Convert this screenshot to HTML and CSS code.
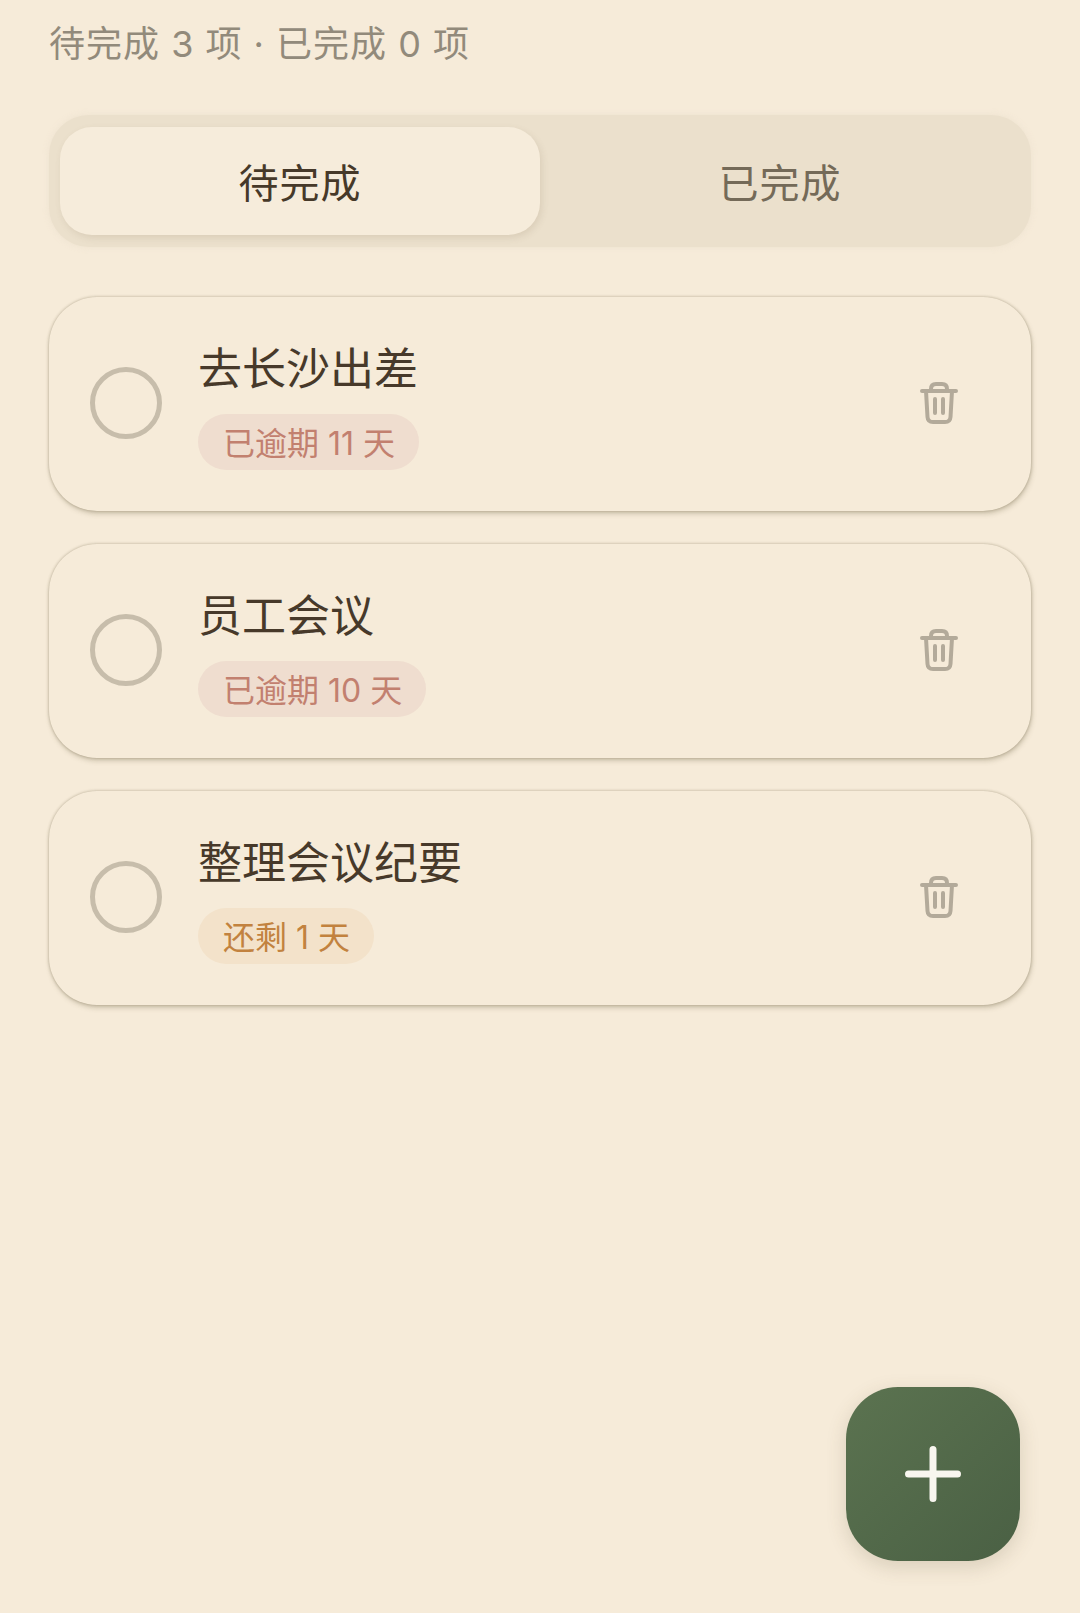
FILE: index.html
```html
<!DOCTYPE html>
<html lang="zh-CN">
<head>
    <meta charset="UTF-8">
    <meta name="viewport" content="width=device-width, initial-scale=1.0">
    <title>待办</title>

    <link rel="stylesheet" href="styles.css">
</head>
<body>

    <div class="page">
        <p class="summary">待完成 3 项 · 已完成 0 项</p>

        <div class="tabs">
            <button class="tab tab-active">待完成</button>
            <button class="tab">已完成</button>
        </div>

        <div class="list">
            <div class="card">
                <span class="check"></span>
                <div class="info">
                    <div class="title">去长沙出差</div>
                    <span class="chip chip-late">已逾期 11 天</span>
                </div>
                <svg class="trash" viewBox="0 0 38 42" fill="none" stroke="currentColor" stroke-width="4" stroke-linecap="round" stroke-linejoin="round">
                    <path d="M2 9H36M11 9V7C11 3.500 13 2 16 2H22C25 2 27 3.500 27 7V9M6 9L7.500 35C7.700 38.500 9.500 40 13 40H25C28.500 40 30.300 38.500 30.500 35L32 9M15 17V31M23 17V31"/>
                </svg>
            </div>

            <div class="card">
                <span class="check"></span>
                <div class="info">
                    <div class="title">员工会议</div>
                    <span class="chip chip-late">已逾期 10 天</span>
                </div>
                <svg class="trash" viewBox="0 0 38 42" fill="none" stroke="currentColor" stroke-width="4" stroke-linecap="round" stroke-linejoin="round">
                    <path d="M2 9H36M11 9V7C11 3.500 13 2 16 2H22C25 2 27 3.500 27 7V9M6 9L7.500 35C7.700 38.500 9.500 40 13 40H25C28.500 40 30.300 38.500 30.500 35L32 9M15 17V31M23 17V31"/>
                </svg>
            </div>

            <div class="card">
                <span class="check"></span>
                <div class="info">
                    <div class="title">整理会议纪要</div>
                    <span class="chip chip-soon">还剩 1 天</span>
                </div>
                <svg class="trash" viewBox="0 0 38 42" fill="none" stroke="currentColor" stroke-width="4" stroke-linecap="round" stroke-linejoin="round">
                    <path d="M2 9H36M11 9V7C11 3.500 13 2 16 2H22C25 2 27 3.500 27 7V9M6 9L7.500 35C7.700 38.500 9.500 40 13 40H25C28.500 40 30.300 38.500 30.500 35L32 9M15 17V31M23 17V31"/>
                </svg>
            </div>
        </div>

        <button class="fab">
            <svg viewBox="0 0 56 56" width="56" height="56" fill="none" stroke="#f8f6ef" stroke-width="7" stroke-linecap="round">
                <path d="M28 3.500V52.500M3.500 28H52.500"/>
            </svg>
        </button>
    </div>

</body>
</html>
```

FILE: styles.css
```css
html, body {
    margin: 0;
    padding: 0;
    height: 100%;
    overflow: hidden;
    background-color: #f6ebd9;
}

.page {
    position: relative;
    height: 1613px;
    box-sizing: border-box;
    padding: 19px 49px 0 49px;
    font-family: Inter, "Noto Sans CJK SC", sans-serif;
}

.summary {
    margin: 0;
    height: 50px;
    line-height: 50px;
    font-size: 36px;
    letter-spacing: 1px;
    color: #928a7b;
}

.tabs {
    display: grid;
    grid-template-columns: 1fr 1fr;
    margin-top: 46px;
    padding: 12px 11px;
    height: 132px;
    box-sizing: border-box;
    border-radius: 40px;
    background-color: #ebe0cc;
    box-shadow: 0 0 6px rgba(235, 224, 205, 0.8);
}

.tab {
    border: none;
    padding: 0;
    background: none;
    border-radius: 32px;
    font-family: inherit;
    font-size: 40px;
    letter-spacing: 1px;
    color: #746a58;
}

.tab-active {
    background-color: #f6ecdb;
    color: #463929;
    box-shadow: 2px 3px 7px rgba(120, 100, 70, 0.14);
}

.list {
    display: flex;
    flex-direction: column;
    gap: 33px;
    margin-top: 50px;
}

.card {
    display: flex;
    align-items: center;
    height: 214px;
    box-sizing: border-box;
    padding: 0 73px 0 41px;
    border-radius: 48px;
    background-color: #f6ebd9;
    box-shadow: 0 0 3px rgba(110, 100, 70, 0.45), 1px 3px 5px rgba(110, 100, 70, 0.28);
}

.check {
    flex: none;
    width: 72px;
    height: 72px;
    box-sizing: border-box;
    margin-top: -2px;
    border: 5px solid #c7bdab;
    border-radius: 50%;
}

.info {
    flex: 1;
    margin-left: 36px;
}

.title {
    font-size: 44px;
    line-height: 60px;
    color: #47392a;
}

.chip {
    display: inline-block;
    margin-top: 15px;
    padding: 0 24px 0 25px;
    height: 56px;
    line-height: 60px;
    border-radius: 28px;
    font-size: 32px;
}

.chip-late {
    background-color: #efddcf;
    color: #c2806f;
}

.chip-soon {
    background-color: #f3e2ca;
    color: #c2823f;
}

.trash {
    flex: none;
    width: 38px;
    height: 42px;
    margin-top: -2px;
    color: #b3aa9a;
}

/* floats over the list, bottom right */
.fab {
    position: absolute;
    left: 846px;
    top: 1387px;
    width: 174px;
    height: 174px;
    display: flex;
    align-items: center;
    justify-content: center;
    border: none;
    padding: 0;
    border-radius: 52px;
    background: linear-gradient(135deg, #5b7350, #4a6044);
    box-shadow: 0 6px 20px rgba(90, 80, 50, 0.18);
}
```
